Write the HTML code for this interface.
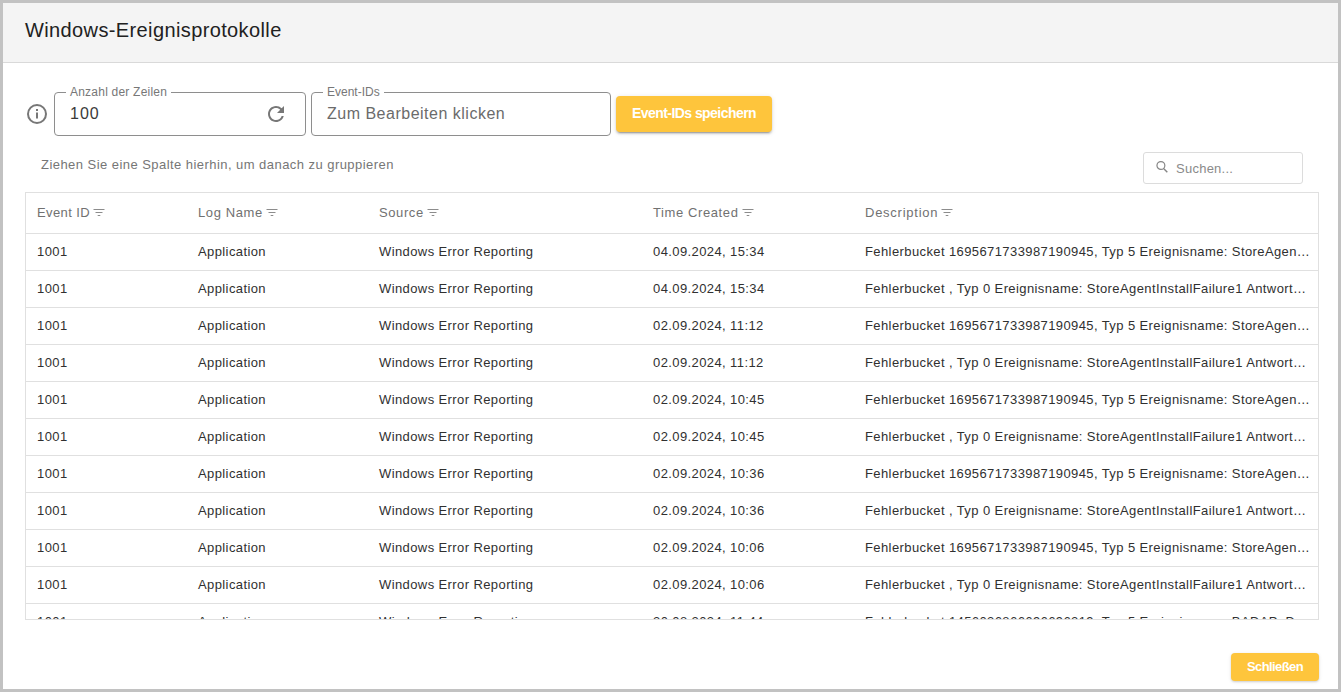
<!DOCTYPE html>
<html><head><meta charset="utf-8">
<style>
html,body{margin:0;padding:0;}
body{width:1341px;height:692px;background:#c2c2c2;position:relative;overflow:hidden;font-family:"Liberation Sans",sans-serif;}
.a{position:absolute;white-space:nowrap;}
#dlg{position:absolute;left:3px;top:3px;width:1335px;height:686px;background:#fff;}
#hdr{position:absolute;left:3px;top:3px;width:1335px;height:59px;background:#f4f4f4;border-bottom:1px solid #d9d9d9;}
#title{left:25px;top:19px;font-size:20px;line-height:22px;color:#212121;letter-spacing:0.38px;}
.fld{position:absolute;border:1px solid #8e8e8e;border-radius:4px;box-sizing:border-box;}
.lbl{position:absolute;background:#fff;padding:0 4px;font-size:12px;line-height:14px;color:#777;}
.btn{position:absolute;background:#fec53c;border-radius:4px;box-shadow:0 3px 1px -2px rgba(0,0,0,.2),0 2px 2px 0 rgba(0,0,0,.14),0 1px 5px 0 rgba(0,0,0,.12);color:#fff;font-weight:bold;font-size:13px;text-align:center;}
#tbl{position:absolute;left:25px;top:192px;width:1294px;height:428px;box-sizing:border-box;border:1px solid #e0e0e0;overflow:hidden;}
.hcell{position:absolute;top:12px;font-size:13px;line-height:16px;color:#717171;letter-spacing:0.6px;white-space:nowrap;}
.fi{position:absolute;}
.row{position:absolute;left:0;width:1292px;height:37px;border-top:1px solid #e0e0e0;box-sizing:border-box;}
.c{position:absolute;top:10px;font-size:13px;line-height:16px;color:#303030;letter-spacing:0.4px;white-space:nowrap;}
.c1{left:11px;} .c2{left:172px;} .c3{left:353px;} .c4{left:627px;} .c5{left:839px;}
</style></head><body>
<div id="dlg"></div>
<div id="hdr"></div>
<div id="title" class="a">Windows-Ereignisprotokolle</div>

<svg class="a" style="left:25px;top:102px" width="24" height="24" viewBox="0 0 24 24"><circle cx="12" cy="12" r="9" fill="none" stroke="#777" stroke-width="2"/><rect x="11" y="10.5" width="2" height="6" fill="#777"/><rect x="11" y="7" width="2" height="2" fill="#777"/></svg>

<div class="fld" style="left:54px;top:92px;width:252px;height:44px;"></div>
<div class="lbl" style="left:66px;top:85px;letter-spacing:0.22px;">Anzahl der Zeilen</div>
<div class="a" style="left:70px;top:105px;font-size:16px;line-height:18px;color:#3a3a3a;letter-spacing:1px;">100</div>
<svg class="a" style="left:264px;top:102px" width="24" height="24" viewBox="0 0 24 24"><path d="M17.65 6.35A7.958 7.958 0 0 0 12 4c-4.42 0-7.990 3.58-7.99 8s3.57 8 7.99 8c3.73 0 6.84-2.550 7.73-6h-2.08A5.99 5.99 0 0 1 12 18c-3.31 0-6-2.69-6-6s2.69-6 6-6c1.66 0 3.14.69 4.22 1.78L13 11h7V4l-2.35 2.35z" fill="#777"/></svg>

<div class="fld" style="left:311px;top:92px;width:300px;height:44px;"></div>
<div class="lbl" style="left:323px;top:85px;">Event-IDs</div>
<div class="a" style="left:327px;top:105px;font-size:16px;line-height:18px;color:#6b6b6b;letter-spacing:0.5px;">Zum Bearbeiten klicken</div>

<div class="btn" style="left:616px;top:96px;width:156px;height:36px;line-height:35px;font-size:14px;letter-spacing:-0.55px;">Event-IDs speichern</div>

<div class="a" style="left:41px;top:157px;font-size:13px;line-height:16px;color:#767676;letter-spacing:0.45px;">Ziehen Sie eine Spalte hierhin, um danach zu gruppieren</div>

<div class="fld" style="left:1143px;top:152px;width:160px;height:32px;border-color:#dcdcdc;border-radius:3px;"></div>
<svg class="a" style="left:1155px;top:160px" width="14" height="14" viewBox="0 0 14 14"><circle cx="5.9" cy="5.5" r="3.95" fill="none" stroke="#858585" stroke-width="1.2"/><path d="M8.8 8.8L12.3 12.3" stroke="#858585" stroke-width="1.4"/></svg>
<div class="a" style="left:1176px;top:161px;font-size:13px;line-height:16px;color:#8a8a8a;letter-spacing:0.25px;">Suchen...</div>

<div id="tbl">
<div class="hcell" style="left:11px;letter-spacing:0.4px">Event ID</div><svg class="fi" style="left:67px;top:16px" width="12" height="8" viewBox="0 0 12 8"><path d="M0.5 0.5H11.5M2.5 3.5H9.5M4.7 6.5H7.3" stroke="#8c8c8c" stroke-width="1"/></svg>
<div class="hcell" style="left:172px">Log Name</div><svg class="fi" style="left:240px;top:16px" width="12" height="8" viewBox="0 0 12 8"><path d="M0.5 0.5H11.5M2.5 3.5H9.5M4.7 6.5H7.3" stroke="#8c8c8c" stroke-width="1"/></svg>
<div class="hcell" style="left:353px">Source</div><svg class="fi" style="left:401px;top:16px" width="12" height="8" viewBox="0 0 12 8"><path d="M0.5 0.5H11.5M2.5 3.5H9.5M4.7 6.5H7.3" stroke="#8c8c8c" stroke-width="1"/></svg>
<div class="hcell" style="left:627px">Time Created</div><svg class="fi" style="left:716px;top:16px" width="12" height="8" viewBox="0 0 12 8"><path d="M0.5 0.5H11.5M2.5 3.5H9.5M4.7 6.5H7.3" stroke="#8c8c8c" stroke-width="1"/></svg>
<div class="hcell" style="left:839px;letter-spacing:0.75px">Description</div><svg class="fi" style="left:915px;top:16px" width="12" height="8" viewBox="0 0 12 8"><path d="M0.5 0.5H11.5M2.5 3.5H9.5M4.7 6.5H7.3" stroke="#8c8c8c" stroke-width="1"/></svg>
<div class="row" style="top:40px"><span class="c c1">1001</span><span class="c c2">Application</span><span class="c c3">Windows Error Reporting</span><span class="c c4">04.09.2024, 15:34</span><span class="c c5">Fehlerbucket 1695671733987190945, Typ 5 Ereignisname: StoreAgen…</span></div>
<div class="row" style="top:77px"><span class="c c1">1001</span><span class="c c2">Application</span><span class="c c3">Windows Error Reporting</span><span class="c c4">04.09.2024, 15:34</span><span class="c c5">Fehlerbucket , Typ 0 Ereignisname: StoreAgentInstallFailure1 Antwort…</span></div>
<div class="row" style="top:114px"><span class="c c1">1001</span><span class="c c2">Application</span><span class="c c3">Windows Error Reporting</span><span class="c c4">02.09.2024, 11:12</span><span class="c c5">Fehlerbucket 1695671733987190945, Typ 5 Ereignisname: StoreAgen…</span></div>
<div class="row" style="top:151px"><span class="c c1">1001</span><span class="c c2">Application</span><span class="c c3">Windows Error Reporting</span><span class="c c4">02.09.2024, 11:12</span><span class="c c5">Fehlerbucket , Typ 0 Ereignisname: StoreAgentInstallFailure1 Antwort…</span></div>
<div class="row" style="top:188px"><span class="c c1">1001</span><span class="c c2">Application</span><span class="c c3">Windows Error Reporting</span><span class="c c4">02.09.2024, 10:45</span><span class="c c5">Fehlerbucket 1695671733987190945, Typ 5 Ereignisname: StoreAgen…</span></div>
<div class="row" style="top:225px"><span class="c c1">1001</span><span class="c c2">Application</span><span class="c c3">Windows Error Reporting</span><span class="c c4">02.09.2024, 10:45</span><span class="c c5">Fehlerbucket , Typ 0 Ereignisname: StoreAgentInstallFailure1 Antwort…</span></div>
<div class="row" style="top:262px"><span class="c c1">1001</span><span class="c c2">Application</span><span class="c c3">Windows Error Reporting</span><span class="c c4">02.09.2024, 10:36</span><span class="c c5">Fehlerbucket 1695671733987190945, Typ 5 Ereignisname: StoreAgen…</span></div>
<div class="row" style="top:299px"><span class="c c1">1001</span><span class="c c2">Application</span><span class="c c3">Windows Error Reporting</span><span class="c c4">02.09.2024, 10:36</span><span class="c c5">Fehlerbucket , Typ 0 Ereignisname: StoreAgentInstallFailure1 Antwort…</span></div>
<div class="row" style="top:336px"><span class="c c1">1001</span><span class="c c2">Application</span><span class="c c3">Windows Error Reporting</span><span class="c c4">02.09.2024, 10:06</span><span class="c c5">Fehlerbucket 1695671733987190945, Typ 5 Ereignisname: StoreAgen…</span></div>
<div class="row" style="top:373px"><span class="c c1">1001</span><span class="c c2">Application</span><span class="c c3">Windows Error Reporting</span><span class="c c4">02.09.2024, 10:06</span><span class="c c5">Fehlerbucket , Typ 0 Ereignisname: StoreAgentInstallFailure1 Antwort…</span></div>
<div class="row" style="top:410px"><span class="c c1">1001</span><span class="c c2">Application</span><span class="c c3">Windows Error Reporting</span><span class="c c4">30.08.2024, 11:44</span><span class="c c5">Fehlerbucket 1456036866696696219, Typ 5 Ereignisname: BADAP_D…</span></div>
</div>

<div class="btn" style="left:1231px;top:653px;width:88px;height:28px;line-height:28px;box-shadow:0 1px 2px rgba(0,0,0,.14),0 1px 4px rgba(0,0,0,.08);letter-spacing:-0.6px;">Schließen</div>
</body></html>
